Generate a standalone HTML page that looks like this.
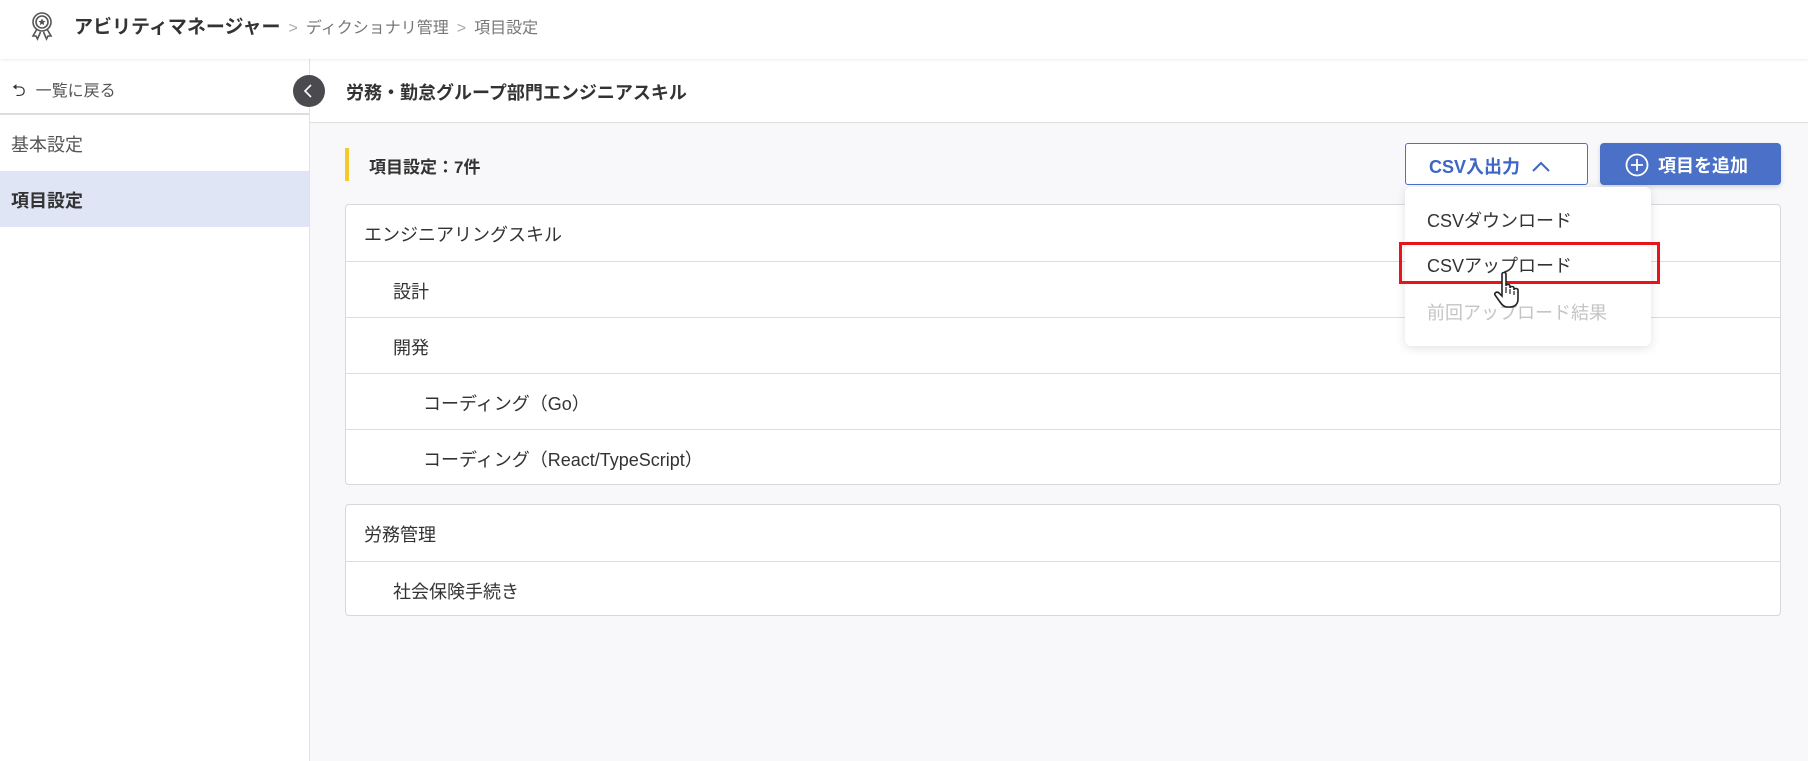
<!DOCTYPE html>
<html><head><meta charset="utf-8"><style>
*{box-sizing:border-box;margin:0;padding:0}
body{width:1808px;height:761px;overflow:hidden;background:#f8f8fa;font-family:"Liberation Sans","Noto Sans CJK JP",sans-serif;color:#333;position:relative}
.hdr{position:absolute;left:0;top:0;width:1808px;height:59px;background:#fff;box-shadow:0 1px 3px rgba(0,0,0,.08);z-index:2}
.bc{position:absolute;left:74px;top:12px;font-size:19px;font-weight:bold;color:#333;white-space:nowrap}
.bc span{font-weight:normal;font-size:16px;color:#777}
.bc .sep{color:#aaa;margin:0 8px}
.side{position:absolute;left:0;top:59px;width:310px;height:702px;background:#fff;border-right:1px solid #e2e2e2}
.back{height:56px;border-bottom:2px solid #ddd;font-size:16px;color:#555;padding:18px 0 0 12px}
.si{height:56px;font-size:18px;color:#555;padding:16px 0 0 11px}
.si.act{background:#dfe5f5;color:#333;font-weight:bold}
.tb{position:absolute;left:310px;top:59px;width:1498px;height:64px;background:#fff;border-bottom:1px solid #ddd}
.tb div{position:absolute;left:36px;top:20px;font-size:18px;font-weight:bold;color:#333}
.coll{position:absolute;left:293px;top:75px;width:32px;height:32px;border-radius:50%;background:#4a4a4f;z-index:3}
.ybar{position:absolute;left:345px;top:148px;width:4px;height:33px;background:#f4c92c}
.lbl{position:absolute;left:369px;top:153px;font-size:17px;font-weight:bold}
.csv{position:absolute;left:1405px;top:143px;width:183px;height:42px;border:1.5px solid #4a70c8;border-radius:3px;background:#fff;color:#3e66c4;font-weight:bold;font-size:18px;padding:9px 0 0 23px}
.add{position:absolute;left:1600px;top:143px;width:181px;height:42px;border-radius:4px;background:#4a70c8;color:#fff;font-weight:bold;font-size:18px;padding:9px 0 0 58px;box-shadow:0 2px 4px rgba(0,0,0,.15)}
.card{position:absolute;left:345px;width:1436px;background:#fff;border:1px solid #d8d8d8;border-radius:4px}
.row{height:56px;border-top:1px solid #ddd;font-size:18px;color:#333;padding:16px 0 0 18px}
.row:first-child{border-top:none}
.l1{padding-left:47px}.l2{padding-left:77px}
.dd{position:absolute;left:1405px;top:187px;width:246px;height:159px;background:#fff;border-radius:6px;box-shadow:0 2px 10px rgba(0,0,0,.12);z-index:4}
.dd div{position:absolute;left:22px;font-size:18px;color:#333}
.red{position:absolute;left:1399px;top:242px;width:261px;height:42px;border:3px solid #e8141c;z-index:5}
</style></head><body>
<div class="hdr">
<svg style="position:absolute;left:29px;top:10px" width="26" height="32" viewBox="0 0 26 32" fill="none" stroke="#555" stroke-width="1.6"><circle cx="13" cy="12" r="9"/><circle cx="13" cy="12" r="6"/><path d="M13 8.5l1.1 2.3 2.4.3-1.8 1.6.5 2.4-2.2-1.2-2.2 1.2.5-2.4-1.8-1.6 2.4-.3z" fill="#555" stroke="none"/><path d="M8 19l-4 7 3 0 1.5 3 3-7M18 19l4 7-3 0-1.5 3-3-7"/></svg>
<div class="bc">アビリティマネージャー<span class="sep">&gt;</span><span>ディクショナリ管理</span><span class="sep">&gt;</span><span>項目設定</span></div>
</div>
<div class="side">
<div class="back"><span style="font-size:17px;color:#333;margin-right:10px">⮌</span>一覧に戻る</div>
<div class="si">基本設定</div>
<div class="si act">項目設定</div>
</div>
<div class="tb"><div>労務・勤怠グループ部門エンジニアスキル</div></div>
<div class="coll"><svg width="32" height="32" viewBox="0 0 32 32"><path d="M18 10l-6 6 6 6" stroke="#fff" stroke-width="1.6" fill="none"/></svg></div>
<div class="ybar"></div>
<div class="lbl">項目設定：7件</div>
<div class="csv">CSV入出力 <svg width="20" height="14" viewBox="0 0 20 14" style="margin-left:6px"><path d="M2 12l8-8 8 8" stroke="#3e66c4" stroke-width="2" fill="none"/></svg></div>
<div class="add"><svg style="position:absolute;left:25px;top:10px" width="24" height="24" viewBox="0 0 24 24" fill="none" stroke="#fff" stroke-width="1.8"><circle cx="12" cy="12" r="10.5"/><path d="M12 6v12M6 12h12"/></svg>項目を追加</div>
<div class="card" style="top:204px;height:281px">
<div class="row">エンジニアリングスキル</div>
<div class="row l1">設計</div>
<div class="row l1">開発</div>
<div class="row l2">コーディング（Go）</div>
<div class="row l2">コーディング（React/TypeScript）</div>
</div>
<div class="card" style="top:504px;height:112px">
<div class="row">労務管理</div>
<div class="row l1">社会保険手続き</div>
</div>
<div class="dd">
<div style="top:20px">CSVダウンロード</div>
<div style="top:65px">CSVアップロード</div>
<div style="top:112px;color:#c4c4c4">前回アップロード結果</div>
</div>
<div class="red"></div>
<svg style="position:absolute;left:1494px;top:270px;z-index:6" width="34" height="40" viewBox="0 0 34 40"><path d="M8 4c0-2 4-2 4 0v12c0-2 4-2 4 0v2c0-2 4-2 4 0v2c0-2 4-2 4 0v9c0 5-3 8-8 8h-3c-3 0-5-2-7-5l-5-7c-1-2 2-4 4-2l3 3z" fill="#fff" stroke="#222" stroke-width="1.6"/><path d="M12 17v6M16 19v5M20 21v4" stroke="#222" stroke-width="1.2"/></svg>
</body></html>
